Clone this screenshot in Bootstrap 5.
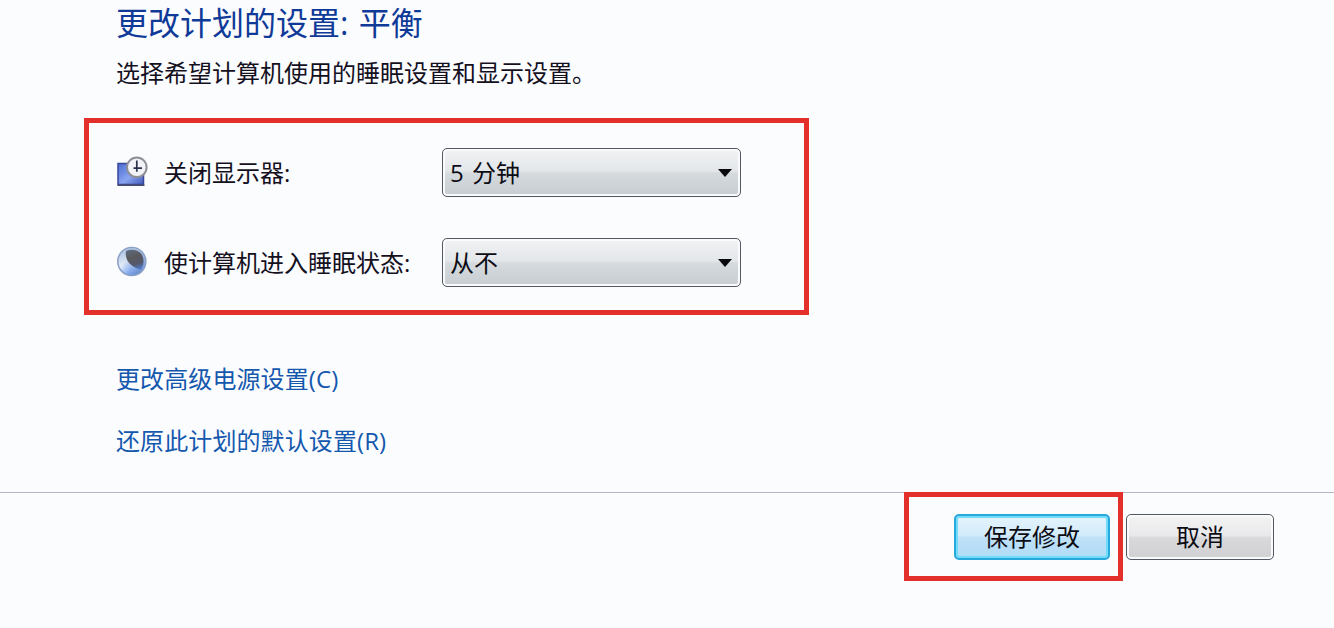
<!DOCTYPE html>
<html lang="zh-CN">

<head>
    <meta charset="UTF-8">
    <meta name="viewport" content="width=device-width, initial-scale=1.0">
    <title>更改计划的设置</title>
    <link rel="stylesheet" href="https://cdn.jsdelivr.net/npm/bootstrap@5.3.0/dist/css/bootstrap.min.css">
    <style>
        body {
            background-color: #fbfcfe;
            color: #14101e;
            font-family: "Open Sans", "Noto Sans CJK SC", sans-serif;
            font-size: 24px;
            line-height: 36px;
            overflow: hidden;
        }

        .plan-main {
            height: 493px;
            padding-left: 84px;
            border-bottom: 1px solid #b4b6c2;
        }

        .plan-title {
            height: 46px;
            font-size: 32px;
            font-weight: 400;
            line-height: 45px;
            color: #0f3a98;
            word-spacing: 2px;
        }

        .indent {
            padding-left: 32px;
        }

        .plan-desc {
            margin-top: 9px;
            height: 63px;
        }

        /* red outlines around the important parts */
        .red-frame {
            border: 5px solid #e3302b;
        }

        .settings-frame {
            width: 725px;
            height: 197px;
            padding: 25px 63px 0 27px;
        }

        .setting-row {
            height: 49px;
            margin-bottom: 41px;
        }

        .setting-icon {
            width: 32px;
            height: 32px;
            margin-right: 16px;
            margin-bottom: 2px;
        }

        .btn {
            --bs-btn-color: #0c0c14;
            font-size: 24px;
            line-height: 36px;
            border: 2px solid #555763;
            border-radius: 5px;
            box-shadow: inset 0 0 0 2px #f8fafb;
        }

        .btn-select {
            width: 299px;
            height: 49px;
            padding: 0 7px 0 7px;
            border-width: 1.5px;
            word-spacing: 2px;
            background: linear-gradient(#f1f2f4 0%, #e4e7ea 46%, #d5dade 52%, #c7cdd2 100%);
        }

        .plan-link {
            color: #1458ae;
            text-decoration: none;
            letter-spacing: .1px;
        }

        .plan-links {
            padding-top: 46px;
            gap: 26px;
        }

        .plan-footer {
            margin-top: -1px;
            padding-right: 60px;
        }

        .save-frame {
            width: 219px;
            height: 89px;
            margin-right: 3px;
            padding: 17px 8px 0 0;
        }

        .btn-save {
            width: 156px;
            height: 46px;
            padding: 0;
            border-color: #27a9dc;
            background: linear-gradient(#e4f4fc 0%, #d3ebfb 46%, #bfe1f8 52%, #b0dbf6 100%);
            box-shadow: inset 0 0 0 2px #6fdcfb;
        }

        .btn-cancel {
            width: 148px;
            height: 46px;
            margin-top: 22px;
            padding: 0;
            border-width: 1.5px;
            background: linear-gradient(#f3f3f4 0%, #e9e9eb 46%, #d9d9dc 52%, #d0d0d3 100%);
        }
    </style>
</head>

<body>
    <main class="plan-main">
        <h1 class="plan-title indent mb-0">更改计划的设置: 平衡</h1>
        <p class="plan-desc indent mb-0">选择希望计算机使用的睡眠设置和显示设置。</p>

        <!-- Sleep and display settings -->
        <div class="red-frame settings-frame">
            <div class="setting-row d-flex align-items-center">
                <svg class="setting-icon" viewBox="0 0 32 32">
                    <defs>
                        <linearGradient id="screenFill" x1="0" y1="0" x2="1" y2="1">
                            <stop offset="0" stop-color="#4a6cd2" />
                            <stop offset=".55" stop-color="#8aa4f0" />
                            <stop offset="1" stop-color="#4059bb" />
                        </linearGradient>
                    </defs>
                    <rect x="2" y="7.5" width="25.5" height="21" fill="url(#screenFill)" stroke="#39469a" stroke-width="1.5" />
                    <path d="M1.5 29.3H28.5" stroke="#4c4c68" stroke-width="1.4" />
                    <circle cx="20.8" cy="11.3" r="9.8" fill="#f1f3f8" stroke="#8d8f97" stroke-width="2" />
                    <path d="M20.8 4.5V15.8M17.5 12.2H26" stroke="#29304c" stroke-width="1.7" fill="none" />
                </svg>
                <span>关闭显示器:</span>
                <button type="button" class="btn btn-select d-flex align-items-center justify-content-between ms-auto">
                    <span>5 分钟</span>
                    <svg width="16" height="10" viewBox="0 0 16 10">
                        <path d="M1 1H15L8 9Z" fill="#08080c" />
                    </svg>
                </button>
            </div>
            <div class="setting-row d-flex align-items-center">
                <svg class="setting-icon" viewBox="0 0 32 32">
                    <defs>
                        <linearGradient id="moonFill" x1="0" y1=".2" x2=".8" y2="1">
                            <stop offset="0" stop-color="#cbd8ee" />
                            <stop offset=".35" stop-color="#f1f6ff" />
                            <stop offset=".65" stop-color="#89b0f4" />
                            <stop offset="1" stop-color="#476fc4" />
                        </linearGradient>
                        <linearGradient id="moonEdge" x1="1" y1="0" x2=".3" y2="1">
                            <stop offset="0" stop-color="#9db6d8" stop-opacity="1" />
                            <stop offset="1" stop-color="#9db6d8" stop-opacity="0" />
                        </linearGradient>
                        <linearGradient id="moonShade" x1=".3" y1="0" x2=".6" y2="1">
                            <stop offset="0" stop-color="#5e6b80" />
                            <stop offset=".35" stop-color="#5a5a5e" />
                            <stop offset=".75" stop-color="#54586a" />
                            <stop offset="1" stop-color="#5078c4" />
                        </linearGradient>
                    </defs>
                    <circle cx="15.8" cy="15.5" r="14" fill="url(#moonFill)" stroke="#8ba0c6" stroke-width="1.6" />
                    <circle cx="15.8" cy="15.5" r="13.4" fill="url(#moonEdge)" />
                    <path d="M10 5C15 2.5 22 3.5 25.5 8C28.5 13 28 19 25 23.5C18 22.5 8 16 10 5Z" fill="url(#moonShade)" />
                </svg>
                <span>使计算机进入睡眠状态:</span>
                <button type="button" class="btn btn-select d-flex align-items-center justify-content-between ms-auto">
                    <span>从不</span>
                    <svg width="16" height="10" viewBox="0 0 16 10">
                        <path d="M1 1H15L8 9Z" fill="#08080c" />
                    </svg>
                </button>
            </div>
        </div>

        <div class="plan-links indent d-flex flex-column align-items-start">
            <a href="#" class="plan-link">更改高级电源设置(C)</a>
            <a href="#" class="plan-link">还原此计划的默认设置(R)</a>
        </div>
    </main>

    <!-- Buttons -->
    <footer class="plan-footer d-flex justify-content-end align-items-start">
        <div class="red-frame save-frame d-flex justify-content-end align-items-start">
            <button type="button" class="btn btn-save">保存修改</button>
        </div>
        <button type="button" class="btn btn-cancel">取消</button>
    </footer>
    <script src="https://cdn.jsdelivr.net/npm/bootstrap@5.3.0/dist/js/bootstrap.bundle.min.js"></script>
</body>

</html>
